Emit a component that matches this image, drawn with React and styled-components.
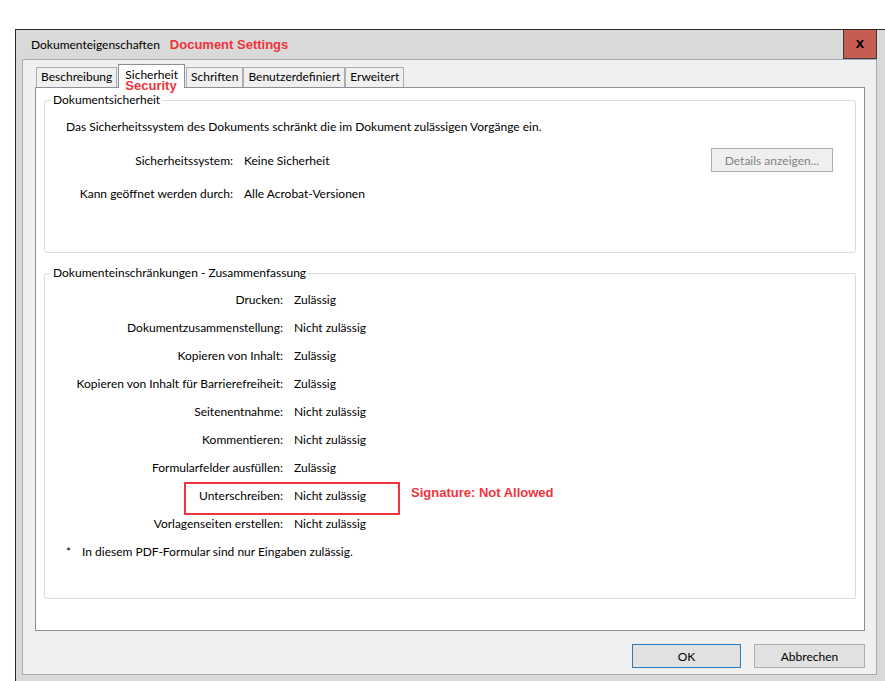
import React from 'react';
import styled, { createGlobalStyle } from 'styled-components';

const UI_FONT = `Lato, "Noto Sans", sans-serif`;
const NOTE_FONT = `"Liberation Sans", Arial, sans-serif`;
const NOTE_RED = '#f0333d';

const GlobalStyle = createGlobalStyle`
	html, body {
		margin: 0;
		padding: 0;
		background: #fff;
		overflow: hidden;
	}
	body {
		font-family: ${UI_FONT};
		font-size: 12px;
		color: #000;
	}
`;

const Window = styled.div`
	margin: 29px 0 0 15px;
	width: 870px;
	box-sizing: border-box;
	border-top: 1px solid #2b2b2b;
	border-left: 1px solid #2b2b2b;
	background: #d9d9d9;
	padding: 0 8px 7px 6px;
`;

const TitleBar = styled.div`
	height: 29px;
	display: flex;
	align-items: center;
	padding-left: 9px;
`;

const Title = styled.span`
	font-size: 12px;
`;

const TitleNote = styled.span`
	margin-left: 10px;
	font-family: ${NOTE_FONT};
	font-weight: bold;
	font-size: 13px;
	color: ${NOTE_RED};
`;

const CloseButton = styled.div`
	margin-left: auto;
	align-self: flex-start;
	width: 34px;
	height: 29px;
	box-sizing: border-box;
	border: 1px solid #3a3a3a;
	border-top: none;
	background: #c75c51;
	display: flex;
	align-items: center;
	justify-content: center;
	font-family: ${NOTE_FONT};
	font-weight: bold;
	font-size: 15px;
	line-height: 1;
	padding-bottom: 3px;
`;

const Body = styled.div`
	height: 616px;
	box-sizing: border-box;
	border: 1px solid #a4adb7;
	background: #f0f0f0;
	padding: 4px 11px 6px 12px;
	display: flex;
	flex-direction: column;
`;

const TabRow = styled.div`
	height: 23px;
	display: flex;
	align-items: flex-end;
	padding-left: 1px;
`;

const Tab = styled.div`
	position: relative;
	z-index: ${p => (p.$active ? 2 : 1)};
	height: ${p => (p.$active ? 24 : 20)}px;
	box-sizing: border-box;
	margin: 0 ${p => (p.$active ? '1px' : '0')} ${p => (p.$active ? '-1px' : '0')};
	padding: ${p => (p.$active ? '2px 6px 0' : '1px 4px 0')};
	border: 1px solid ${p => (p.$active ? '#8c8f96' : '#adadad')};
	border-bottom: none;
	background: ${p => (p.$active ? '#fff' : '#f0f0f0')};
	line-height: 16px;
	white-space: nowrap;
`;

const TabNote = styled.span`
	position: absolute;
	left: 6px;
	top: 13px;
	font-family: ${NOTE_FONT};
	font-weight: bold;
	font-size: 13px;
	line-height: 15px;
	color: ${NOTE_RED};
`;

const Panel = styled.div`
	height: 544px;
	box-sizing: border-box;
	border: 1px solid #8c8f96;
	background: #fff;
	padding: 4px 8px 0;
	display: flex;
	flex-direction: column;
	gap: 12px;
`;

const Group = styled.fieldset`
	margin: 0;
	padding: 0;
	min-width: 0;
	height: ${p => p.$height}px;
	box-sizing: border-box;
	border: 1px solid #d7dce2;
	border-radius: 3px;
`;

const Legend = styled.legend`
	margin-left: 6px;
	padding: 0 2px;
	line-height: 16px;
`;

const Intro = styled.div`
	margin-top: 11px;
	padding-left: 21px;
	line-height: 16px;
`;

const InfoGrid = styled.div`
	margin-top: 13px;
	display: grid;
	grid-template-columns: 188px auto 1fr;
	grid-auto-rows: 24px;
	row-gap: 9px;
	column-gap: 11px;
	align-items: center;
`;

const Label = styled.span`
	text-align: right;
	white-space: nowrap;
`;

const Value = styled.span`
	white-space: nowrap;
`;

const DetailsButton = styled.button`
	justify-self: end;
	margin-right: 22px;
	width: 122px;
	height: 24px;
	border: 1px solid #adadad;
	background: #efefef;
	color: #838383;
	font-family: ${UI_FONT};
	font-size: 12px;
	padding: 0;
`;

const RuleList = styled.div`
	margin-top: 4px;
`;

const RuleRow = styled.div`
	position: relative;
	height: 28px;
	display: grid;
	grid-template-columns: 238px 1fr;
	column-gap: 11px;
	align-items: center;
`;

const Highlight = styled.div`
	position: absolute;
	left: 139px;
	top: 1px;
	width: 216px;
	height: 33px;
	box-sizing: border-box;
	border: 2px solid ${NOTE_RED};
`;

const RowNote = styled.span`
	position: absolute;
	left: 366px;
	top: 4px;
	font-family: ${NOTE_FONT};
	font-weight: bold;
	font-size: 13px;
	color: ${NOTE_RED};
`;

const Footnote = styled.div`
	height: 28px;
	display: flex;
	align-items: center;
	padding-left: 21px;
`;

const Star = styled.span`
	width: 16px;
`;

const ButtonRow = styled.div`
	margin-top: 13px;
	display: flex;
	justify-content: flex-end;
	gap: 13px;
`;

const DialogButton = styled.button`
	width: ${p => p.$width}px;
	height: 24px;
	box-sizing: border-box;
	border: 1px solid ${p => (p.$default ? '#2f7bbf' : '#adadad')};
	background: #e1e1e1;
	font-family: ${UI_FONT};
	font-size: 12px;
	color: #000;
	padding: 0;
`;

const tabs = ['Beschreibung', 'Sicherheit', 'Schriften', 'Benutzerdefiniert', 'Erweitert'];

const rules = [
	['Drucken', 'Zulässig'],
	['Dokumentzusammenstellung', 'Nicht zulässig'],
	['Kopieren von Inhalt', 'Zulässig'],
	['Kopieren von Inhalt für Barrierefreiheit', 'Zulässig'],
	['Seitenentnahme', 'Nicht zulässig'],
	['Kommentieren', 'Nicht zulässig'],
	['Formularfelder ausfüllen', 'Zulässig'],
	['Unterschreiben', 'Nicht zulässig', true],
	['Vorlagenseiten erstellen', 'Nicht zulässig'],
];

export default function App() {
	return (
		<>
			<GlobalStyle />
			<Window>
				<TitleBar>
					<Title>Dokumenteigenschaften</Title>
					<TitleNote>Document Settings</TitleNote>
					<CloseButton>x</CloseButton>
				</TitleBar>
				<Body>
					<TabRow>
						{tabs.map(name => (
							<Tab key={name} $active={name === 'Sicherheit'}>
								{name}
								{name === 'Sicherheit' && <TabNote>Security</TabNote>}
							</Tab>
						))}
					</TabRow>
					<Panel>
						<Group $height={161}>
							<Legend>Dokumentsicherheit</Legend>
							<Intro>
								Das Sicherheitssystem des Dokuments schränkt die im Dokument zulässigen Vorgänge ein.
							</Intro>
							<InfoGrid>
								<Label>Sicherheitssystem:</Label>
								<Value>Keine Sicherheit</Value>
								<DetailsButton>Details anzeigen...</DetailsButton>
								<Label>Kann geöffnet werden durch:</Label>
								<Value>Alle Acrobat-Versionen</Value>
							</InfoGrid>
						</Group>
						<Group $height={334}>
							<Legend>Dokumenteinschränkungen - Zusammenfassung</Legend>
							<RuleList>
								{rules.map(([label, value, marked]) => (
									<RuleRow key={label}>
										<Label>{label}:</Label>
										<Value>{value}</Value>
										{marked && (
											<>
												<Highlight />
												<RowNote>Signature: Not Allowed</RowNote>
											</>
										)}
									</RuleRow>
								))}
								<Footnote>
									<Star>*</Star>
									In diesem PDF-Formular sind nur Eingaben zulässig.
								</Footnote>
							</RuleList>
						</Group>
					</Panel>
					<ButtonRow>
						<DialogButton $width={109} $default>OK</DialogButton>
						<DialogButton $width={111}>Abbrechen</DialogButton>
					</ButtonRow>
				</Body>
			</Window>
		</>
	);
}
